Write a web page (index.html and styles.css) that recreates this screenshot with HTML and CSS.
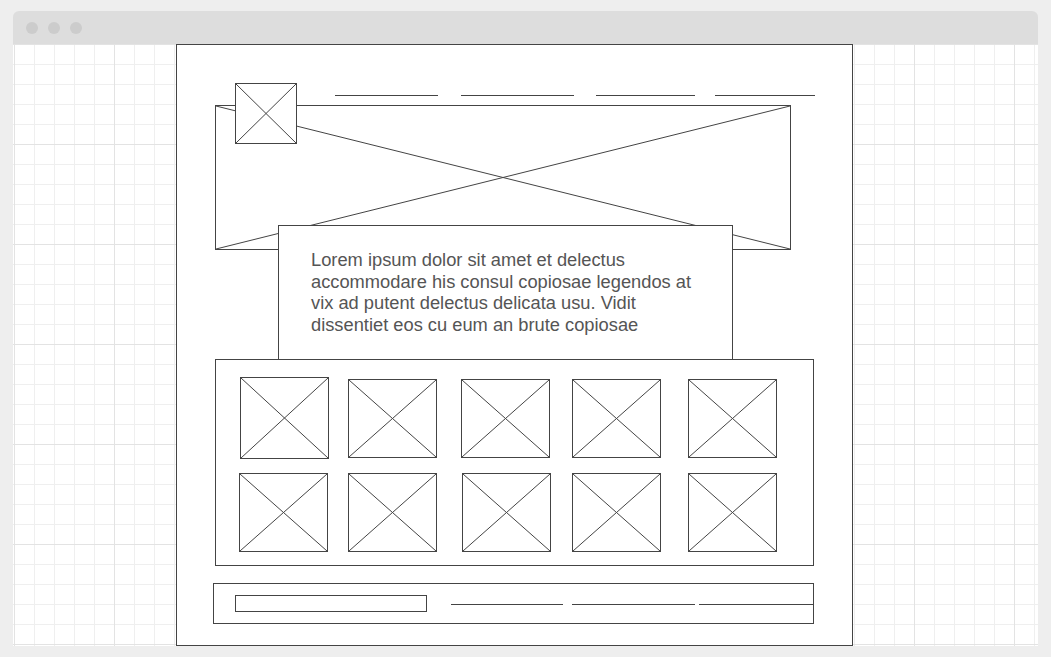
FILE: index.html
```html
<!DOCTYPE html>
<html lang="en">
<head>
    <meta charset="UTF-8">
    <meta name="viewport" content="width=device-width, initial-scale=1.0">
    <title>Wireframe - Landing Page</title>
    <link rel="stylesheet" href="styles.css">
</head>
<body>
    <div class="window">
        <!-- Title bar -->
        <div class="titlebar">
            <span class="dot"></span>
            <span class="dot"></span>
            <span class="dot"></span>
        </div>

        <!-- Grid canvas -->
        <div class="canvas">
            <div class="page">
                <!-- Header -->
                <header class="site-header">
                    <div class="ph logo">
                        <svg viewBox="0 0 100 100" preserveAspectRatio="none"><line x1="0" y1="0" x2="100" y2="100" vector-effect="non-scaling-stroke"/><line x1="100" y1="0" x2="0" y2="100" vector-effect="non-scaling-stroke"/></svg>
                    </div>
                    <nav class="nav">
                        <span class="nav-link nav-home"></span>
                        <span class="nav-link nav-work"></span>
                        <span class="nav-link nav-about"></span>
                        <span class="nav-link nav-contact"></span>
                    </nav>
                </header>

                <!-- Hero -->
                <div class="ph hero">
                    <svg viewBox="0 0 100 100" preserveAspectRatio="none"><line x1="0" y1="0" x2="100" y2="100" vector-effect="non-scaling-stroke"/><line x1="100" y1="0" x2="0" y2="100" vector-effect="non-scaling-stroke"/></svg>
                </div>

                <!-- Intro -->
                <div class="intro">
                    <p>Lorem ipsum dolor sit amet et delectus accommodare his consul copiosae legendos at vix ad putent delectus delicata usu. Vidit dissentiet eos cu eum an brute copiosae</p>
                </div>

                <!-- Gallery -->
                <div class="gallery">
                    <div class="ph thumb thumb-lead"><svg viewBox="0 0 100 100" preserveAspectRatio="none"><line x1="0" y1="0" x2="100" y2="100" vector-effect="non-scaling-stroke"/><line x1="100" y1="0" x2="0" y2="100" vector-effect="non-scaling-stroke"/></svg></div>
                    <div class="ph thumb"><svg viewBox="0 0 100 100" preserveAspectRatio="none"><line x1="0" y1="0" x2="100" y2="100" vector-effect="non-scaling-stroke"/><line x1="100" y1="0" x2="0" y2="100" vector-effect="non-scaling-stroke"/></svg></div>
                    <div class="ph thumb"><svg viewBox="0 0 100 100" preserveAspectRatio="none"><line x1="0" y1="0" x2="100" y2="100" vector-effect="non-scaling-stroke"/><line x1="100" y1="0" x2="0" y2="100" vector-effect="non-scaling-stroke"/></svg></div>
                    <div class="ph thumb"><svg viewBox="0 0 100 100" preserveAspectRatio="none"><line x1="0" y1="0" x2="100" y2="100" vector-effect="non-scaling-stroke"/><line x1="100" y1="0" x2="0" y2="100" vector-effect="non-scaling-stroke"/></svg></div>
                    <div class="ph thumb"><svg viewBox="0 0 100 100" preserveAspectRatio="none"><line x1="0" y1="0" x2="100" y2="100" vector-effect="non-scaling-stroke"/><line x1="100" y1="0" x2="0" y2="100" vector-effect="non-scaling-stroke"/></svg></div>
                    <div class="ph thumb thumb-left"><svg viewBox="0 0 100 100" preserveAspectRatio="none"><line x1="0" y1="0" x2="100" y2="100" vector-effect="non-scaling-stroke"/><line x1="100" y1="0" x2="0" y2="100" vector-effect="non-scaling-stroke"/></svg></div>
                    <div class="ph thumb"><svg viewBox="0 0 100 100" preserveAspectRatio="none"><line x1="0" y1="0" x2="100" y2="100" vector-effect="non-scaling-stroke"/><line x1="100" y1="0" x2="0" y2="100" vector-effect="non-scaling-stroke"/></svg></div>
                    <div class="ph thumb thumb-right"><svg viewBox="0 0 100 100" preserveAspectRatio="none"><line x1="0" y1="0" x2="100" y2="100" vector-effect="non-scaling-stroke"/><line x1="100" y1="0" x2="0" y2="100" vector-effect="non-scaling-stroke"/></svg></div>
                    <div class="ph thumb"><svg viewBox="0 0 100 100" preserveAspectRatio="none"><line x1="0" y1="0" x2="100" y2="100" vector-effect="non-scaling-stroke"/><line x1="100" y1="0" x2="0" y2="100" vector-effect="non-scaling-stroke"/></svg></div>
                    <div class="ph thumb"><svg viewBox="0 0 100 100" preserveAspectRatio="none"><line x1="0" y1="0" x2="100" y2="100" vector-effect="non-scaling-stroke"/><line x1="100" y1="0" x2="0" y2="100" vector-effect="non-scaling-stroke"/></svg></div>
                </div>

                <!-- Footer -->
                <footer class="site-footer">
                    <div class="search"></div>
                    <span class="foot-link foot-terms"></span>
                    <span class="foot-link foot-privacy"></span>
                    <span class="foot-link foot-social"></span>
                </footer>
            </div>
        </div>
    </div>
</body>
</html>
```

FILE: styles.css
```css
body {
    margin: 0;
    padding: 0;
    background: #eee;
    font-family: 'Liberation Sans', Arial, sans-serif;
    color: #555;
}

.window {
    margin: 11px 0 0 13px;
    width: 1025px;
}

.titlebar {
    display: flex;
    align-items: center;
    gap: 10px;
    height: 33px;
    padding-left: 13px;
    box-sizing: border-box;
    background: #ddd;
    border-radius: 6px 6px 0 0;
}

.dot {
    width: 12px;
    height: 12px;
    border-radius: 50%;
    background: #ccc;
}

.canvas {
    height: 602px;
    background-color: #fff;
    background-image:
        linear-gradient(90deg, #e3e3e3 1px, transparent 1px),
        linear-gradient(#e3e3e3 1px, transparent 1px),
        linear-gradient(90deg, #efefef 1px, transparent 1px),
        linear-gradient(#efefef 1px, transparent 1px);
    background-size: 100px 100px, 100px 100px, 20px 20px, 20px 20px;
    background-position: 1px 0;
}

.page {
    margin-left: 163px;
    width: 677px;
    height: 602px;
    box-sizing: border-box;
    border: 1px solid #444;
    background: #fff;
}

/* placeholder box with an X */
.ph {
    box-sizing: border-box;
    border: 1px solid #444;
    background: #fff;
}

.ph svg {
    display: block;
    width: 100%;
    height: 100%;
}

.ph line {
    stroke: #444;
    stroke-width: 1;
}

.site-header {
    position: relative;
    z-index: 1;
    display: flex;
    align-items: flex-start;
    height: 60px;
    padding: 38px 0 0 58px;
    box-sizing: border-box;
}

.logo {
    flex: none;
    width: 62px;
    height: 61px;
}

.nav {
    display: flex;
    margin: 12px 0 0 38px;
}

.nav-link {
    display: block;
    border-top: 1px solid #444;
}

.nav-home { width: 103px; }
.nav-work { width: 113px; margin-left: 23px; }
.nav-about { width: 99px; margin-left: 22px; }
.nav-contact { width: 100px; margin-left: 20px; }

.hero {
    margin-left: 38px;
    width: 576px;
    height: 145px;
}

.intro {
    position: relative;
    z-index: 1;
    margin: -25px 0 0 101px;
    width: 455px;
    height: 134px;
    box-sizing: border-box;
    padding: 23px 21px 0 32px;
    border: 1px solid #444;
    border-bottom: none;
    background: #fff;
}

.intro p {
    margin: 0;
    font-size: 18.3px;
    line-height: 21.5px;
}

.gallery {
    display: grid;
    grid-template-columns: 108px 113px 111px 116px 89px;
    row-gap: 14px;
    align-items: start;
    align-content: start;
    margin-left: 38px;
    width: 599px;
    height: 207px;
    box-sizing: border-box;
    padding: 17px 0 0 24px;
    border: 1px solid #444;
}

.thumb {
    width: 89px;
    height: 79px;
}

.gallery .thumb:nth-child(-n+5) {
    margin-top: 2px;
}

.gallery .thumb.thumb-lead {
    margin-top: 0;
    height: 82px;
}

.thumb-left { margin-left: -1px; }
.thumb-right { margin-left: 1px; }

.site-footer {
    display: flex;
    align-items: center;
    margin: 17px 0 0 36px;
    width: 601px;
    height: 41px;
    box-sizing: border-box;
    padding-left: 21px;
    border: 1px solid #444;
}

.search {
    width: 192px;
    height: 17px;
    box-sizing: border-box;
    border: 1px solid #444;
}

.foot-link {
    margin-top: 2px;
    border-top: 1px solid #444;
}

.foot-terms { width: 112px; margin-left: 24px; }
.foot-privacy { width: 123px; margin-left: 9px; }
.foot-social { flex: 1; margin-left: 4px; }
```
